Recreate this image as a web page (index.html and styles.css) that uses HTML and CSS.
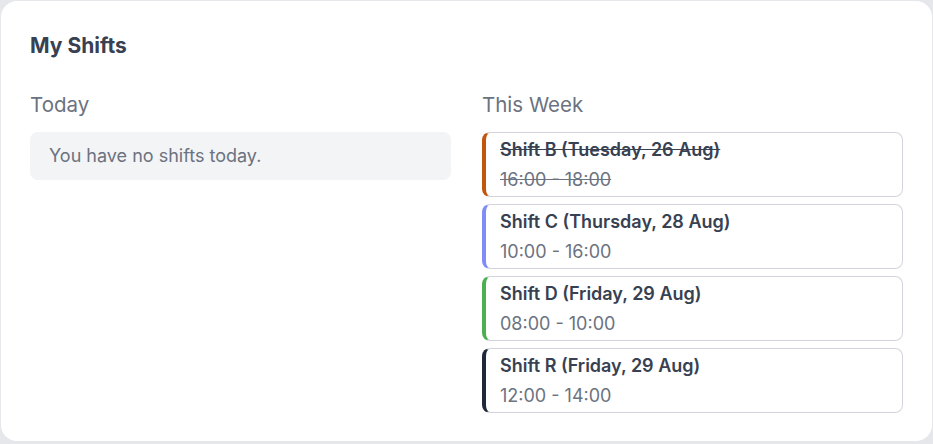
FILE: index.html
```html
<!DOCTYPE html>
<html lang="en">
<head>
    <meta charset="UTF-8">
    <title>My Shifts</title>
    <link rel="stylesheet" href="styles.css">
</head>
<body>
<div class="card">
    <h2 class="card-title">My Shifts</h2>

    <div class="columns">
        <div class="column">
            <h3 class="section-label">Today</h3>
            <div class="empty">You have no shifts today.</div>
        </div>

        <div class="column">
            <h3 class="section-label">This Week</h3>
            <div class="shift-list">
                <div class="shift shift-orange done">
                    <div class="shift-name">Shift B (Tuesday, 26 Aug)</div>
                    <div class="shift-time">16:00 - 18:00</div>
                </div>
                <div class="shift shift-indigo">
                    <div class="shift-name">Shift C (Thursday, 28 Aug)</div>
                    <div class="shift-time">10:00 - 16:00</div>
                </div>
                <div class="shift shift-green">
                    <div class="shift-name">Shift D (Friday, 29 Aug)</div>
                    <div class="shift-time">08:00 - 10:00</div>
                </div>
                <div class="shift shift-dark">
                    <div class="shift-name">Shift R (Friday, 29 Aug)</div>
                    <div class="shift-time">12:00 - 14:00</div>
                </div>
            </div>
        </div>
    </div>
</div>
</body>
</html>
```

FILE: styles.css
```css
* {
    box-sizing: border-box;
}

body {
    margin: 0;
    background-color: #e5e7eb;
    font-family: Inter, "Noto Sans", sans-serif;
}

.card {
    margin: 1px;
    height: 440px;
    background-color: #fff;
    border-radius: 16px;
    padding: 31px 29px 0;
}

.card-title {
    margin: 0;
    font-size: 21px;
    line-height: 28px;
    font-weight: 700;
    color: #374151;
}

.columns {
    display: grid;
    grid-template-columns: 1fr 1fr;
    column-gap: 31px;
    margin-top: 31px;
}

.section-label {
    margin: 0 0 13px;
    font-size: 20.5px;
    line-height: 28px;
    font-weight: 400;
    color: #6b7280;
}

.empty {
    background-color: #f3f4f6;
    border-radius: 8px;
    padding: 12px 19px;
    font-size: 18px;
    line-height: 24px;
    color: #6b7280;
}

.shift-list {
    display: flex;
    flex-direction: column;
    gap: 7px;
}

.shift {
    border: 1px solid #d1d5db;
    border-left-width: 4px;
    border-radius: 8px;
    padding: 5px 14px 4px;
}

.shift-name {
    font-size: 18px;
    line-height: 24px;
    font-weight: 600;
    color: #374151;
}

.shift-time {
    margin-top: 6px;
    font-size: 18px;
    line-height: 24px;
    color: #6b7280;
}

.done .shift-name,
.done .shift-time {
    text-decoration: line-through;
}

.shift-orange { border-left-color: #c2560c; }
.shift-indigo { border-left-color: #818cf8; }
.shift-green  { border-left-color: #4caf50; }
.shift-dark   { border-left-color: #1f2937; }
```
